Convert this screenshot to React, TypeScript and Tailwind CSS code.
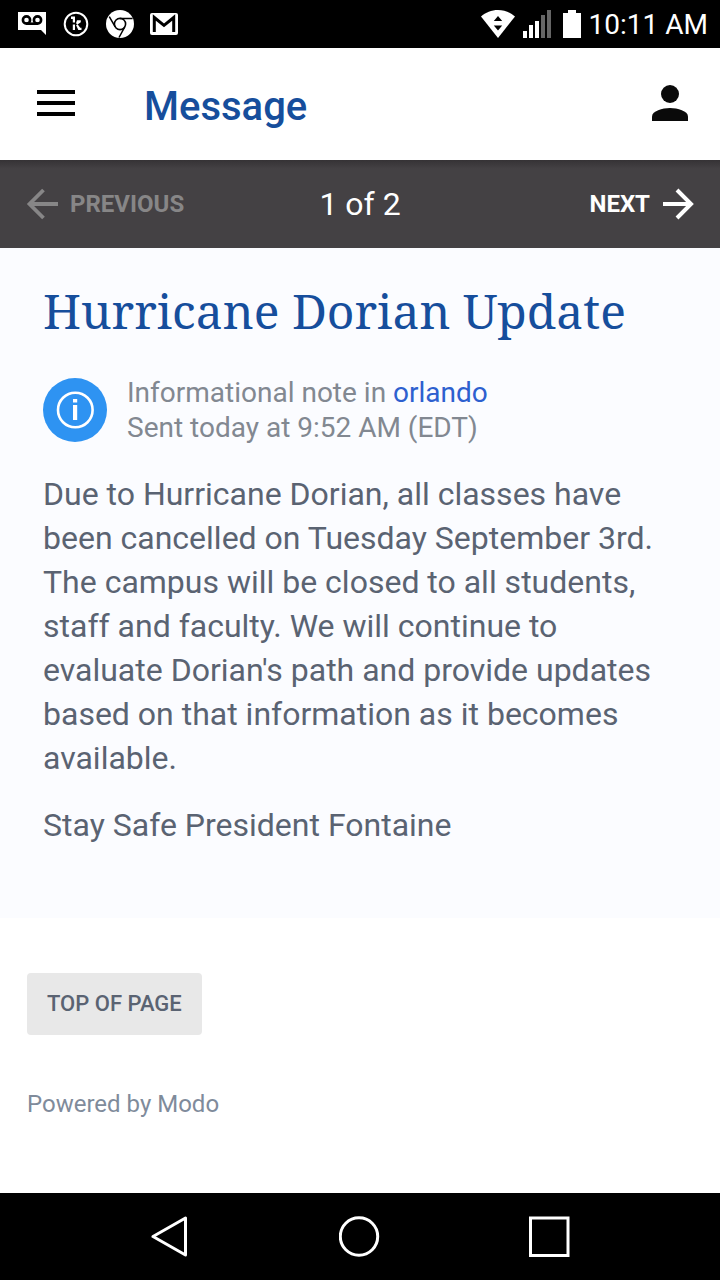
import React from "react";

function StatusBar() {
  return (
    <div className="flex h-12 items-center justify-between bg-black pl-[18px] pr-3 text-white">
      <div className="flex items-center gap-4">
        <svg width="28" height="28" viewBox="0 0 28 28" aria-label="Voicemail" role="img">
          <path d="M0 2h28v23l-5-5H0z" fill="#fff" />
          <g fill="none" stroke="#000" strokeWidth="2.6">
            <circle cx="8.500" cy="10" r="3.600" />
            <circle cx="19.500" cy="10" r="3.600" />
            <path d="M8 13.700h12" />
          </g>
        </svg>
        <svg width="28" height="28" viewBox="0 0 28 28" aria-label="App notification" role="img">
          <circle cx="14" cy="14" r="11.300" fill="none" stroke="#fff" strokeWidth="2" />
          <path
            d="M9 6.500h4v6h-2.200V9H9zM10.800 14.500H13V20h-2.200zM15 10.200h3.800v2l-3.300 2.300-1.500-1.300zM14 15l1.800-.5 2.400 3.200h1.300V20h-3.200z"
            fill="#fff"
          />
        </svg>
        <svg width="28" height="28" viewBox="0 0 28 28" aria-label="Chrome" role="img">
          <circle cx="14" cy="14" r="14" fill="#fff" />
          <circle cx="14" cy="14" r="5.600" fill="none" stroke="#000" strokeWidth="1.600" />
          <path d="M14 8.400h12.600M9.200 16.800L3.300 6.700M18.800 16.800L13 27.500" stroke="#000" strokeWidth="1.500" />
        </svg>
        <svg width="28" height="28" viewBox="0 0 28 28" aria-label="Gmail" role="img">
          <rect y="3" width="28" height="22" rx="2" fill="#fff" />
          <path d="M4.300 22V7.500L14 15.300l9.700-7.800V22" fill="none" stroke="#000" strokeWidth="3" />
        </svg>
      </div>
      <div className="flex items-center">
        <svg width="34" height="28" viewBox="0 0 34 28" aria-label="Wi-Fi" role="img">
          <path d="M0 6.500C4.500 2.500 10.500 0 17 0s12.500 2.500 17 6.500L17 28z" fill="#fff" />
          <path d="M17 6l4.200 5h-8.400zM12.800 15.500h8.400L17 20.500z" fill="#000" />
        </svg>
        <svg className="ml-2" width="28" height="28" viewBox="0 0 28 28" aria-label="Signal" role="img">
          <path d="M0 21h4v7H0zM6 15h4v13H6zM12 11h4v17h-4z" fill="#fff" />
          <path d="M18 5h4v23h-4zM24 0h4v28h-4z" fill="#666" />
        </svg>
        <svg className="ml-3" width="18" height="28" viewBox="0 0 18 28" aria-label="Battery" role="img">
          <path d="M5 0h8v3h5v25H0V3h5z" fill="#fff" />
        </svg>
        <span className="ml-2 pt-0.5 text-[28px] leading-[46px]">10:11 AM</span>
      </div>
    </div>
  );
}

function Header() {
  return (
    <header className="flex h-28 items-center bg-white px-8 pb-0.5">
      <button type="button" aria-label="Menu" className="flex h-12 w-12 items-center justify-center">
        <svg width="38" height="26" viewBox="0 0 38 26">
          <path d="M0 0h38v4H0zM0 11h38v4H0zM0 22h38v4H0z" fill="#000" />
        </svg>
      </button>
      <h1 className="ml-16 flex-1 pt-2 text-[40px] font-medium leading-[48px] text-[#164e9c]">Message</h1>
      <button type="button" aria-label="Account">
        <svg width="36" height="36" viewBox="0 0 36 36">
          <circle cx="18" cy="9" r="9" fill="#0a0a0a" />
          <path d="M0 36v-4.500C0 26 10.500 23 18 23s18 3 18 8.500V36z" fill="#0a0a0a" />
        </svg>
      </button>
    </header>
  );
}

function Pager() {
  return (
    <nav
      aria-label="Messages"
      className="grid h-22 grid-cols-[1fr_auto_1fr] items-center bg-[#444144] bg-linear-to-b from-[#353235] to-[#444144] to-10% px-[26px] text-white"
    >
      <button
        type="button"
        disabled
        className="flex items-center gap-3 justify-self-start text-2xl font-bold text-[#878687]"
      >
        <svg width="32" height="32" viewBox="0 0 32 32" fill="none" stroke="currentColor" strokeWidth="3.800">
          <path d="M32 16H4M17.500 2l-14 14 14 14" />
        </svg>
        PREVIOUS
      </button>
      <span className="text-[32px] leading-[44px]">1 of 2</span>
      <button type="button" className="flex items-center gap-3 justify-self-end text-2xl font-bold">
        NEXT
        <svg width="32" height="32" viewBox="0 0 32 32" fill="none" stroke="currentColor" strokeWidth="4">
          <path d="M1 16h28M15 2l14 14-14 14" />
        </svg>
      </button>
    </nav>
  );
}

function Message() {
  return (
    <article className="bg-[#fbfcff] px-[43px] pb-[71px] pt-[31px] text-[#5a6372]">
      <h2 className="font-['Noto_Serif','Droid_Serif','DejaVu_Serif_Condensed','DejaVu_Serif',serif] text-5xl leading-[64px] text-[#164e9c]">
        Hurricane Dorian Update
      </h2>
      <div className="mt-8 flex items-center gap-5">
        <svg className="shrink-0" width="64" height="64" viewBox="0 0 64 64" aria-hidden="true">
          <circle cx="32" cy="32" r="32" fill="#2e93f2" />
          <circle cx="32.300" cy="32" r="17.300" fill="none" stroke="#fff" strokeWidth="2.600" />
          <path d="M30 21h4.200v3.600H30zM30 27h4.200v15H30z" fill="#fff" />
        </svg>
        <p className="text-[28px] leading-[35px] text-[#828891]">
          Informational note in{" "}
          <a href="#orlando" className="text-[#2d60cf]">
            orlando
          </a>
          <br />
          Sent today at 9:52 AM (EDT)
        </p>
      </div>
      <div className="mt-[27px] flex flex-col gap-[23px] text-[32px] leading-[44px]">
        <p>
          Due to Hurricane Dorian, all classes have been cancelled on Tuesday September 3rd. The campus will be closed
          to all students, staff and faculty. We will continue to evaluate Dorian's path and provide updates based on
          that information as it becomes available.
        </p>
        <p>Stay Safe President Fontaine</p>
      </div>
    </article>
  );
}

function Footer() {
  return (
    <footer className="flex-1 bg-white px-[27px] pb-[73px] pt-[55px]">
      <button
        type="button"
        onClick={() => window.scrollTo({ top: 0 })}
        className="block rounded bg-[#e8e8e8] px-5 py-4 text-[22px] font-medium leading-[30px] text-[#5a6372]"
      >
        TOP OF PAGE
      </button>
      <p className="mt-[53px] text-2xl text-[#7f8b9b]">Powered by Modo</p>
    </footer>
  );
}

function NavigationBar() {
  return (
    <div className="grid h-[87px] grid-cols-[1fr_auto_1fr] items-center bg-black px-[150px]">
      <button type="button" aria-label="Back" className="justify-self-start">
        <svg width="38" height="42" viewBox="0 0 38 42">
          <path d="M3 20.500L35.500 2v37z" fill="none" stroke="#fff" strokeWidth="3" strokeLinejoin="round" />
        </svg>
      </button>
      <button type="button" aria-label="Home">
        <svg width="42" height="42" viewBox="0 0 42 42">
          <circle cx="20" cy="20.500" r="18.700" fill="none" stroke="#fff" strokeWidth="3" />
        </svg>
      </button>
      <button type="button" aria-label="Recent apps" className="justify-self-end">
        <svg width="42" height="42" viewBox="0 0 42 42">
          <rect x="2.500" y="2" width="37.500" height="37.500" fill="none" stroke="#fff" strokeWidth="3" />
        </svg>
      </button>
    </div>
  );
}

export default function App() {
  return (
    <div className="flex min-h-screen flex-col bg-white font-['Roboto',sans-serif]">
      <StatusBar />
      <Header />
      <Pager />
      <Message />
      <Footer />
      <NavigationBar />
    </div>
  );
}
